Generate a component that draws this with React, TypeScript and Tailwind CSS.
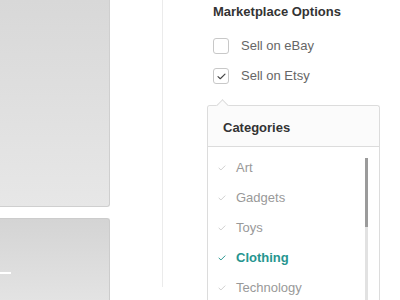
import React from "react";

const items = [
  { label: "Art", active: false },
  { label: "Gadgets", active: false },
  { label: "Toys", active: false },
  { label: "Clothing", active: true },
  { label: "Technology", active: false },
];

function Check({ className }: { className?: string }) {
  return (
    <svg viewBox="0 0 10 8" className={className} fill="none" stroke="currentColor" strokeWidth="1.3" strokeLinecap="round" strokeLinejoin="round">
      <path d="M1 4.2 L3.6 6.6 L9 1.2" />
    </svg>
  );
}

export default function App() {
  return (
    <div
      className="flex h-[300px] w-[400px] overflow-hidden bg-white text-[13px]"
      style={{ fontFamily: '"Liberation Sans", Arial, sans-serif' }}
    >
      {/* left preview panels */}
      <div className="flex w-[110px] shrink-0 flex-col gap-[11px]">
        <div className="h-[207px] rounded-br-[3px] border-r border-b border-[#cfcfcf] bg-gradient-to-b from-[#d8d8d8] to-[#e7e7e7]" />
        <div className="relative flex-1 rounded-tr-[3px] border-t border-r border-[#cccccc] bg-gradient-to-b from-[#d4d4d4] to-[#e3e3e3]">
          <div className="absolute left-0 top-[53px] h-[2px] w-[11px] bg-white" />
        </div>
      </div>

      <div className="ml-[52px] h-[287px] w-px shrink-0 bg-[#ebebeb]" />

      <div className="ml-[44px] flex w-[173px] shrink-0 flex-col">
        <div className="pl-[6px] pt-[4px] text-[13px] font-bold leading-4 text-[#333]">Marketplace Options</div>

        <div className="mt-[18px] flex items-center pl-[6px]">
          <span className="h-[16px] w-[16px] rounded-[3px] border border-[#c8c8c8] bg-white" />
          <span className="ml-[12px] leading-4 text-[#666]">Sell on eBay</span>
        </div>
        <div className="mt-[14px] flex items-center pl-[6px]">
          <span className="flex h-[16px] w-[16px] items-center justify-center rounded-[3px] border border-[#c8c8c8] bg-white">
            <Check className="h-[7px] w-[9px] text-[#444]" />
          </span>
          <span className="ml-[12px] leading-4 text-[#666]">Sell on Etsy</span>
        </div>

        <div className="relative mt-[21px] flex-1 rounded-t-[3px] border-x border-t border-[#dcdcdc] bg-white">
          <div className="absolute left-[10px] top-[-5px] h-[9px] w-[9px] rotate-45 border-l border-t border-[#dcdcdc] bg-[#fbfbfb]" />
          <div className="relative h-[41px] rounded-t-[3px] border-b border-[#dcdcdc] bg-[#fbfbfb] pl-[15px] pt-[14px] text-[13px] font-bold leading-4 text-[#333]">
            Categories
          </div>
          <div className="relative flex">
            <div className="flex flex-1 flex-col pt-[6px]">
              {items.map((it) => (
                <div key={it.label} className="flex h-[30px] items-center pl-[10px]">
                  <Check className={it.active ? "h-[6px] w-[8px] text-[#26958f]" : "h-[6px] w-[8px] text-[#cfcfcf]"} />
                  <span className={it.active ? "ml-[10px] font-bold text-[#26958f]" : "ml-[10px] text-[#999]"}>{it.label}</span>
                </div>
              ))}
            </div>
            <div className="mr-[11px] mt-[11px] flex w-[3px] flex-col bg-[#e2e2e2]">
              <div className="h-[69px] bg-[#9b9b9b]" />
            </div>
          </div>
        </div>
      </div>
    </div>
  );
}
